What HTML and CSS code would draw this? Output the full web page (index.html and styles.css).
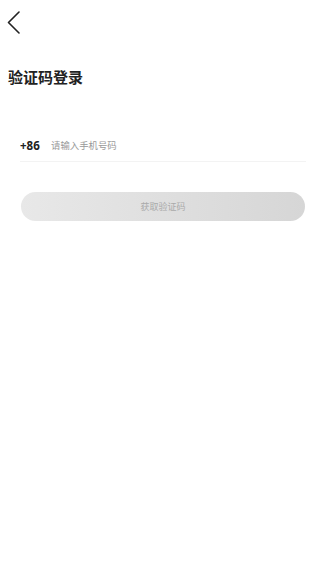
FILE: index.html
```html
<!DOCTYPE html>
<html lang="zh">
<head>
<meta charset="utf-8">
<link rel="stylesheet" href="styles.css">
</head>
<body>
<div class="page">
  <div class="header">
    <svg class="back" width="14" height="24" viewBox="0 0 14 24">
      <path d="M12 1 L1.5 11.5 L12 22" fill="none" stroke="#222" stroke-width="1.6" stroke-linecap="round" stroke-linejoin="round"/>
    </svg>
  </div>
  <h1 class="title">验证码登录</h1>
  <div class="phone-row">
    <span class="code">+86</span>
    <span class="placeholder">请输入手机号码</span>
  </div>
  <div class="btn">获取验证码</div>
</div>
</body>
</html>
```
FILE: styles.css
```css
html, body {
  margin: 0;
  padding: 0;
  background: #fff;
}
body {
  font-family: "Noto Sans CJK SC", "Noto Sans", sans-serif;
  width: 320px;
  height: 581px;
  overflow: hidden;
}
.page {
  display: flex;
  flex-direction: column;
}
.header {
  height: 45px;
  padding-left: 7px;
  padding-top: 11px;
  box-sizing: border-box;
}
.back {
  display: block;
}
.title {
  margin: 21px 0 0 8px;
  font-size: 15px;
  line-height: 21px;
  font-weight: 700;
  color: #222;
}
.phone-row {
  margin: 42px 14px 0 20px;
  height: 32px;
  border-bottom: 1px solid #f3f3f3;
  display: flex;
  align-items: center;
  box-sizing: content-box;
}
.code {
  font-family: "Noto Sans", sans-serif;
  font-weight: 700;
  font-size: 11.5px;
  color: #222;
  width: 31px;
}
.placeholder {
  font-size: 9.4px;
  color: #999;
}
.btn {
  margin: 30px 15px 0 21px;
  height: 29px;
  border-radius: 15px;
  background: linear-gradient(90deg, #e8e8e8, #d6d6d6);
  display: flex;
  align-items: center;
  justify-content: center;
  font-size: 9px;
  color: #aaa;
}
```
